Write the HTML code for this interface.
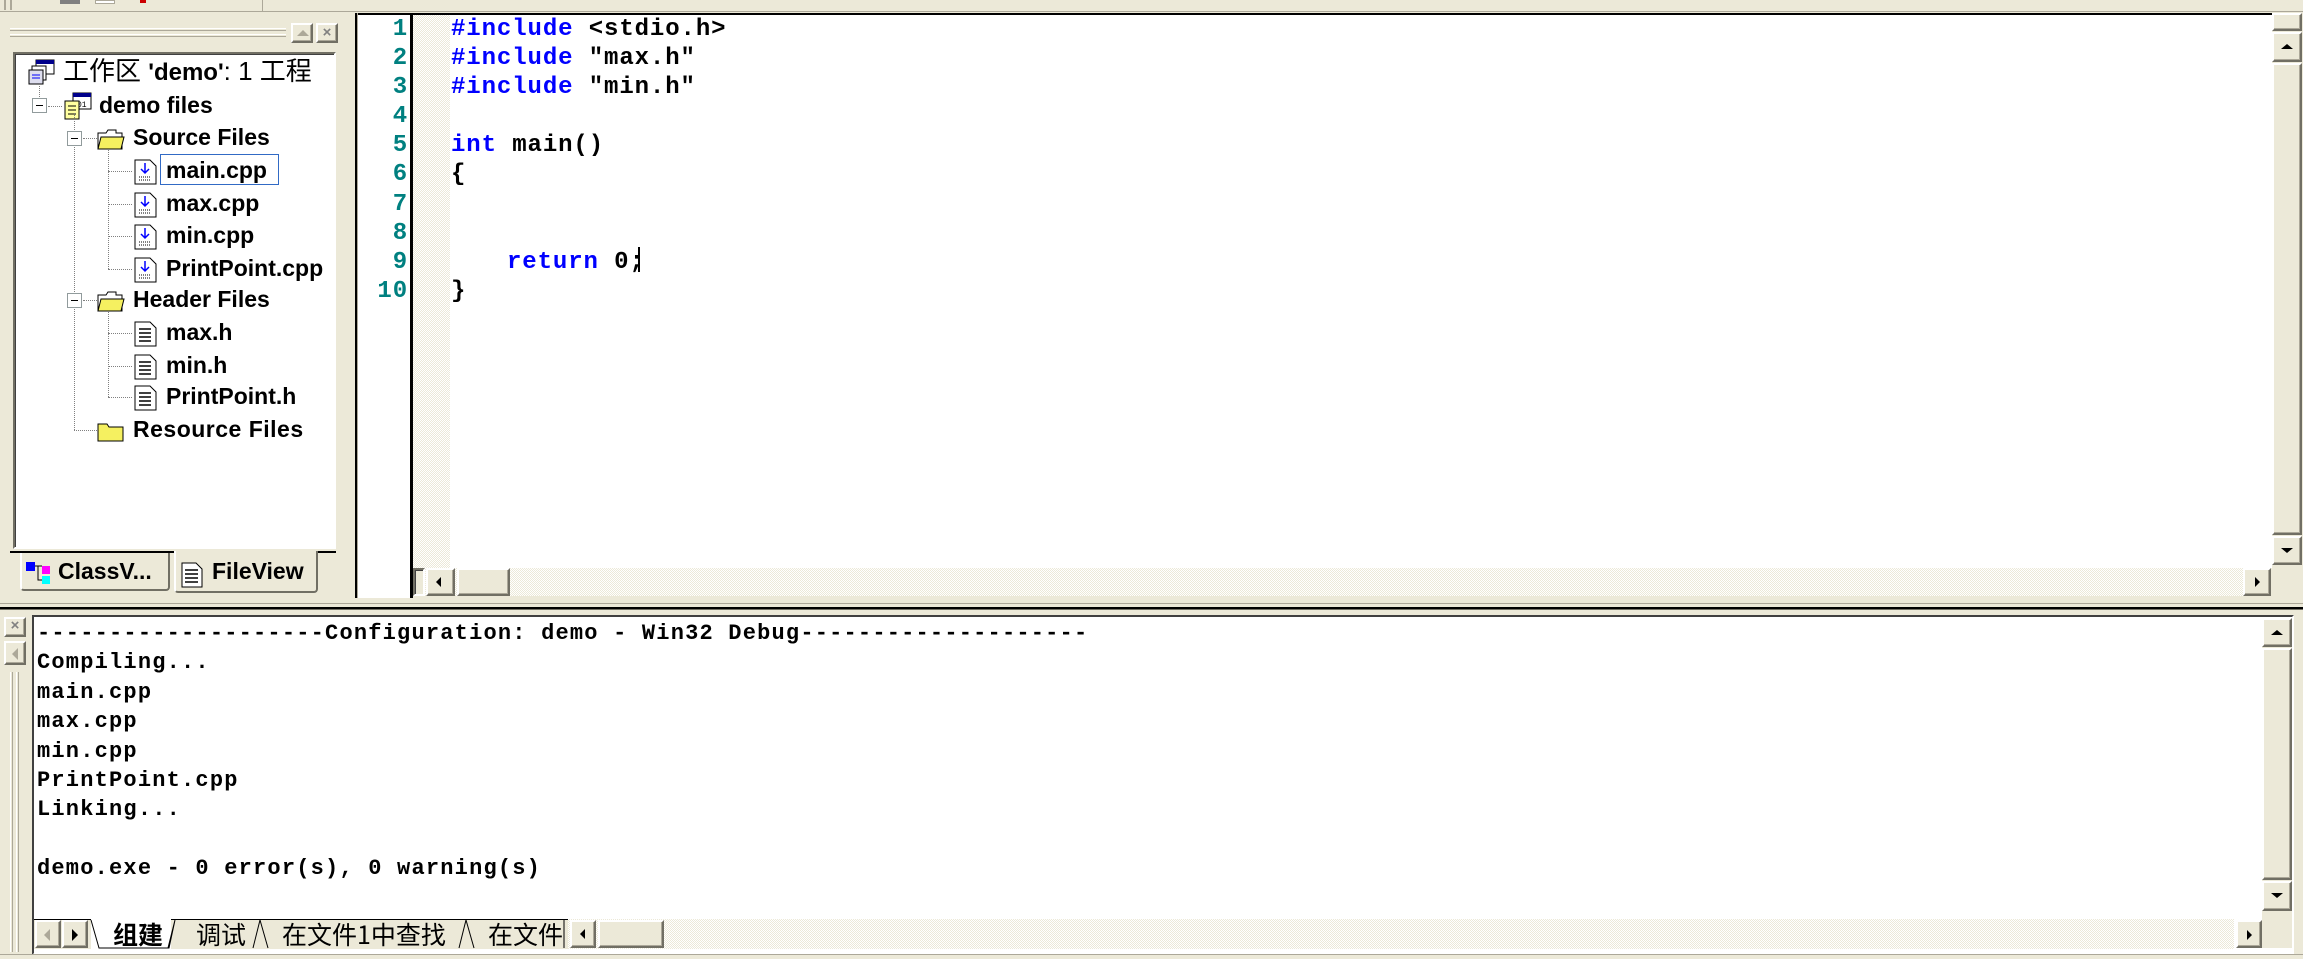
<!DOCTYPE html>
<html><head><meta charset="utf-8"><style>
*{margin:0;padding:0;box-sizing:border-box}
body{width:2303px;height:959px;background:#ece9d8;position:relative;overflow:hidden;font-family:"Liberation Sans","Noto Sans CJK SC",sans-serif}
.a{position:absolute}
.hatch{background:repeating-conic-gradient(#ece9d8 0 25%,#fff 0 50%) 0 0/2px 2px}
.btn{position:absolute;background:#ece9d8;border:2px solid;border-color:#fff #716f64 #716f64 #fff;box-shadow:inset -1px -1px 0 #aca899}
.sunk{border:2px solid;border-color:#716f64 #fff #fff #716f64;box-shadow:inset 1px 1px 0 #404040}
.tree{font-weight:bold;font-size:23px;color:#000;white-space:nowrap}
.code{font-family:"Liberation Mono",monospace;font-weight:bold;font-size:24px;letter-spacing:0.9px;line-height:29.1px;white-space:pre}
.out{font-family:"Liberation Mono",monospace;font-weight:bold;font-size:22px;letter-spacing:1.2px;line-height:29.4px;white-space:pre}
.kw{color:#0000ff}
.ln{color:#008080;text-align:right}
.dot{position:absolute;border-left:1px dotted #808080}
.doth{position:absolute;border-top:1px dotted #808080}
.tog{position:absolute;width:15px;height:15px;border:1px solid #919b9c;background:#fff}
.tog:after{content:"";position:absolute;left:3px;top:6px;width:7px;height:1px;background:#000}
.tri{width:0;height:0;position:absolute}
</style></head><body>
<div class="a" style="left:0;top:0;width:2303px;height:12px;background:#ece9d8;border-bottom:1px solid #aca899"></div>
<div class="a" style="left:4px;top:0;width:2px;height:10px;background:#aca899"></div>
<div class="a" style="left:10px;top:0;width:2px;height:10px;background:#aca899"></div>
<div class="a" style="left:60px;top:0;width:20px;height:4px;background:#808080"></div>
<div class="a" style="left:95px;top:0;width:20px;height:4px;background:#fff;border:1px solid #aca899"></div>
<div class="a" style="left:140px;top:0;width:6px;height:3px;background:#c00"></div>
<div class="a" style="left:262px;top:0;width:1px;height:12px;background:#aca899"></div>

<div class="a" style="left:10px;top:28px;width:276px;height:3px;border-top:1px solid #fff;border-bottom:1px solid #aca899"></div>
<div class="a" style="left:10px;top:34px;width:276px;height:3px;border-top:1px solid #fff;border-bottom:1px solid #aca899"></div>
<div class="btn" style="left:291px;top:23px;width:22px;height:20px"><div class="tri" style="left:4px;top:5px;border-left:6px solid transparent;border-right:6px solid transparent;border-bottom:6px solid #aca899"></div></div>
<div class="btn" style="left:316px;top:23px;width:22px;height:20px;font-size:15px;line-height:15px;text-align:center;color:#808080;font-weight:bold">×</div>

<div class="a sunk" style="left:13px;top:52px;width:323px;height:497px;background:#fff"></div>
<div class="a tree" style="left:28px;top:59px;font-weight:normal;font-size:22px;line-height:26px">
<svg width="28" height="26" style="vertical-align:-5px" viewBox="0 0 28 26"><rect x="8" y="1" width="18" height="14" fill="#fff" stroke="#000"/><rect x="8" y="1" width="18" height="4" fill="#00008b"/><rect x="4" y="7" width="14" height="14" fill="#fff" stroke="#000"/><rect x="1" y="11" width="14" height="14" fill="#dde" stroke="#000"/><line x1="4" y1="16" x2="12" y2="16" stroke="#00f"/><line x1="4" y1="19" x2="12" y2="19" stroke="#00f"/></svg></div>
<div class="a" style="left:63px;top:55px;font-size:26px;line-height:32px;white-space:nowrap;font-family:'Liberation Sans','Noto Sans CJK SC',sans-serif">工作区 <b style="font-size:24px">'demo'</b>: 1 工程</div>

<div class="dot" style="left:39px;top:86px;height:13px"></div>
<div class="tog" style="left:32px;top:98px"></div>
<div class="doth" style="left:48px;top:106px;width:14px"></div>
<svg class="a" style="left:63px;top:92px" width="30" height="28" viewBox="0 0 30 28"><rect x="10" y="1" width="18" height="16" fill="#fff" stroke="#000"/><rect x="10" y="1" width="18" height="4" fill="#00008b"/><text x="14" y="15" font-size="8" font-family="Liberation Mono">01</text><rect x="2" y="9" width="14" height="18" fill="#ffffa0" stroke="#000"/><line x1="5" y1="14" x2="13" y2="14" stroke="#000"/><line x1="5" y1="18" x2="13" y2="18" stroke="#000"/><line x1="5" y1="22" x2="13" y2="22" stroke="#000"/></svg>
<div class="a tree" style="left:99px;top:92px">demo files</div>

<div class="dot" style="left:74px;top:113px;height:317px"></div>
<div class="tog" style="left:67px;top:131px"></div>
<div class="doth" style="left:83px;top:138px;width:14px"></div>
<div class="doth" style="left:74px;top:430px;width:23px"></div>
<div class="tog" style="left:67px;top:293px"></div>
<div class="doth" style="left:83px;top:300px;width:14px"></div>

<div class="dot" style="left:108px;top:150px;height:119px"></div>
<div class="dot" style="left:108px;top:312px;height:85px"></div>

<svg class="a" style="left:97px;top:127px" width="28" height="24" viewBox="0 0 28 24"><path d="M1 6h8l2-3h8v3h6v16H1z" fill="#fff" stroke="#000"/><path d="M4 10h23l-3 12H1z" fill="#f5f060" stroke="#000"/></svg>
<div class="a tree" style="left:133px;top:124px">Source Files</div>
<svg class="a" style="left:97px;top:289px" width="28" height="24" viewBox="0 0 28 24"><path d="M1 6h8l2-3h8v3h6v16H1z" fill="#fff" stroke="#000"/><path d="M4 10h23l-3 12H1z" fill="#f5f060" stroke="#000"/></svg>
<div class="a tree" style="left:133px;top:286px">Header Files</div>
<svg class="a" style="left:97px;top:419px" width="28" height="24" viewBox="0 0 28 24"><path d="M1 5h9l2 3h14v14H1z" fill="#f5f060" stroke="#000"/></svg>
<div class="a tree" style="left:133px;top:416px;letter-spacing:0.5px">Resource Files</div>

<div class="doth" style="left:108px;top:171px;width:24px"></div>
<div class="doth" style="left:108px;top:204px;width:24px"></div>
<div class="doth" style="left:108px;top:236px;width:24px"></div>
<div class="doth" style="left:108px;top:269px;width:24px"></div>
<div class="doth" style="left:108px;top:333px;width:24px"></div>
<div class="doth" style="left:108px;top:366px;width:24px"></div>
<div class="doth" style="left:108px;top:397px;width:24px"></div>
<svg class="a" style="left:134px;top:159px" width="24" height="26" viewBox="0 0 24 26"><path d="M1 1h15l6 6v18H1z" fill="#fff" stroke="#000"/><path d="M11 4v9M7 10l4 4 4-4" stroke="#00f" fill="none" stroke-width="1.5"/><path d="M5 18h12M5 21h12" stroke="#000" stroke-dasharray="1 1"/></svg>
<svg class="a" style="left:134px;top:192px" width="24" height="26" viewBox="0 0 24 26"><path d="M1 1h15l6 6v18H1z" fill="#fff" stroke="#000"/><path d="M11 4v9M7 10l4 4 4-4" stroke="#00f" fill="none" stroke-width="1.5"/><path d="M5 18h12M5 21h12" stroke="#000" stroke-dasharray="1 1"/></svg>
<svg class="a" style="left:134px;top:224px" width="24" height="26" viewBox="0 0 24 26"><path d="M1 1h15l6 6v18H1z" fill="#fff" stroke="#000"/><path d="M11 4v9M7 10l4 4 4-4" stroke="#00f" fill="none" stroke-width="1.5"/><path d="M5 18h12M5 21h12" stroke="#000" stroke-dasharray="1 1"/></svg>
<svg class="a" style="left:134px;top:257px" width="24" height="26" viewBox="0 0 24 26"><path d="M1 1h15l6 6v18H1z" fill="#fff" stroke="#000"/><path d="M11 4v9M7 10l4 4 4-4" stroke="#00f" fill="none" stroke-width="1.5"/><path d="M5 18h12M5 21h12" stroke="#000" stroke-dasharray="1 1"/></svg>
<svg class="a" style="left:134px;top:321px" width="24" height="26" viewBox="0 0 24 26"><path d="M1 1h15l6 6v18H1z" fill="#fff" stroke="#000"/><path d="M5 8h12M5 12h12M5 16h12M5 20h12" stroke="#000" stroke-width="1.5"/></svg>
<svg class="a" style="left:134px;top:354px" width="24" height="26" viewBox="0 0 24 26"><path d="M1 1h15l6 6v18H1z" fill="#fff" stroke="#000"/><path d="M5 8h12M5 12h12M5 16h12M5 20h12" stroke="#000" stroke-width="1.5"/></svg>
<svg class="a" style="left:134px;top:385px" width="24" height="26" viewBox="0 0 24 26"><path d="M1 1h15l6 6v18H1z" fill="#fff" stroke="#000"/><path d="M5 8h12M5 12h12M5 16h12M5 20h12" stroke="#000" stroke-width="1.5"/></svg>
<div class="a" style="left:160px;top:154px;width:119px;height:31px;border:1px solid #316ac5"></div>
<div class="a tree" style="left:166px;top:157px">main.cpp</div>
<div class="a tree" style="left:166px;top:190px">max.cpp</div>
<div class="a tree" style="left:166px;top:222px">min.cpp</div>
<div class="a tree" style="left:166px;top:255px">PrintPoint.cpp</div>
<div class="a tree" style="left:166px;top:319px">max.h</div>
<div class="a tree" style="left:166px;top:352px">min.h</div>
<div class="a tree" style="left:166px;top:383px">PrintPoint.h</div>

<div class="a" style="left:10px;top:551px;width:326px;height:2px;background:#000"></div>
<div class="a" style="left:20px;top:553px;width:150px;height:38px;border:2px solid;border-top:none;border-color:#fff #716f64 #716f64 #fff;border-radius:0 0 4px 4px"></div>
<svg class="a" style="left:25px;top:561px" width="30" height="26" viewBox="0 0 30 26"><rect x="1" y="1" width="9" height="9" fill="#00f"/><rect x="17" y="5" width="8" height="8" fill="#f0f"/><rect x="17" y="15" width="8" height="8" fill="#0ff"/><path d="M10 5h7M13 5v14h4" stroke="#000" fill="none"/></svg>
<div class="a tree" style="left:58px;top:558px">ClassV...</div>
<div class="a" style="left:174px;top:551px;width:144px;height:42px;background:#ece9d8;border:2px solid;border-top:none;border-color:#fff #716f64 #716f64 #fff;border-radius:0 0 4px 4px"></div>
<svg class="a" style="left:181px;top:562px" width="22" height="26" viewBox="0 0 22 26"><path d="M1 1h14l6 6v18H1z" fill="#fff" stroke="#000"/><path d="M4 8h13M4 12h13M4 16h13M4 20h13" stroke="#000" stroke-width="1.5"/></svg>
<div class="a tree" style="left:212px;top:558px">FileView</div>

<div class="a" style="left:355px;top:13px;width:3px;height:585px;background:#000;border-right:1px solid #aca899"></div>
<div class="a" style="left:358px;top:13px;width:1914px;height:555px;background:#fff;border-top:2px solid #000"></div>
<div class="a" style="left:358px;top:560px;width:52px;height:38px;background:#fff"></div>
<div class="a" style="left:410px;top:13px;width:3px;height:585px;background:#000"></div>
<div class="a hatch" style="left:413px;top:15px;width:37px;height:553px"></div>
<div class="a code ln" style="left:358px;top:15px;width:50px">1
2
3
4
5
6
7
8
9
10</div>
<div class="a code" style="left:451px;top:15px"><span class="kw">#include</span> &lt;stdio.h&gt;
<span class="kw">#include</span> "max.h"
<span class="kw">#include</span> "min.h"

<span class="kw">int</span> main()
{


</div>
<div class="a code" style="left:507px;top:248px"><span class="kw">return</span> 0;</div>
<div class="a code" style="left:451px;top:277px">}</div>
<div class="a" style="left:638px;top:247px;width:2px;height:25px;background:#000"></div>

<div class="a hatch" style="left:413px;top:568px;width:1830px;height:28px"></div>
<div class="a sunk" style="left:413px;top:568px;width:12px;height:28px;background:#ece9d8"></div>
<div class="btn" style="left:426px;top:568px;width:29px;height:28px"><div class="tri" style="left:8px;top:7px;border-top:5px solid transparent;border-bottom:5px solid transparent;border-right:5px solid #000"></div></div>
<div class="btn" style="left:457px;top:568px;width:53px;height:28px"></div>
<div class="btn" style="left:2243px;top:568px;width:28px;height:28px"><div class="tri" style="left:10px;top:7px;border-top:5px solid transparent;border-bottom:5px solid transparent;border-left:5px solid #000"></div></div>
<div class="a" style="left:2272px;top:13px;width:30px;height:555px;background:#ece9d8"></div>
<div class="btn" style="left:2272px;top:13px;width:30px;height:18px"></div>
<div class="btn" style="left:2272px;top:32px;width:30px;height:30px"><div class="tri" style="left:7px;top:10px;border-left:6px solid transparent;border-right:6px solid transparent;border-bottom:5px solid #000"></div></div>
<div class="btn" style="left:2272px;top:63px;width:30px;height:472px"></div>
<div class="btn" style="left:2272px;top:536px;width:30px;height:29px"><div class="tri" style="left:7px;top:10px;border-left:6px solid transparent;border-right:6px solid transparent;border-top:5px solid #000"></div></div>

<div class="a" style="left:0;top:600px;width:2303px;height:4px;border-bottom:1px solid #aca899"></div>
<div class="a" style="left:0;top:607px;width:2303px;height:3px;background:#000;border-bottom:1px solid #716f64"></div>

<div class="btn" style="left:4px;top:617px;width:22px;height:20px;font-size:15px;line-height:14px;text-align:center;color:#808080;font-weight:bold">×</div>
<div class="btn" style="left:4px;top:641px;width:22px;height:24px"><div class="tri" style="left:6px;top:5px;border-top:6px solid transparent;border-bottom:6px solid transparent;border-right:6px solid #aca899"></div></div>
<div class="a" style="left:10px;top:672px;width:3px;height:280px;border-left:1px solid #fff;border-right:1px solid #aca899"></div>
<div class="a" style="left:16px;top:672px;width:3px;height:280px;border-left:1px solid #fff;border-right:1px solid #aca899"></div>

<div class="a" style="left:32px;top:615px;width:2262px;height:340px;background:#fff;border:2px solid;border-color:#404040 #fff #fff #404040"></div>
<div class="a out" style="left:37px;top:619px">--------------------Configuration: demo - Win32 Debug--------------------
Compiling...
main.cpp
max.cpp
min.cpp
PrintPoint.cpp
Linking...

demo.exe - 0 error(s), 0 warning(s)</div>

<div class="a" style="left:2262px;top:618px;width:30px;height:330px;background:#ece9d8"></div>
<div class="btn" style="left:2262px;top:618px;width:30px;height:29px"><div class="tri" style="left:7px;top:10px;border-left:6px solid transparent;border-right:6px solid transparent;border-bottom:5px solid #000"></div></div>
<div class="btn" style="left:2262px;top:648px;width:30px;height:232px"></div>
<div class="btn" style="left:2262px;top:881px;width:30px;height:30px"><div class="tri" style="left:7px;top:10px;border-left:6px solid transparent;border-right:6px solid transparent;border-top:5px solid #000"></div></div>

<div class="a hatch" style="left:34px;top:919px;width:2200px;height:30px"></div>
<div class="a" style="left:34px;top:919px;width:534px;height:30px;background:#ece9d8;border-top:1px solid #000"></div>
<div class="btn" style="left:35px;top:920px;width:26px;height:28px"><div class="tri" style="left:7px;top:7px;border-top:6px solid transparent;border-bottom:6px solid transparent;border-right:6px solid #aca899"></div></div>
<div class="btn" style="left:62px;top:920px;width:26px;height:28px"><div class="tri" style="left:8px;top:7px;border-top:6px solid transparent;border-bottom:6px solid transparent;border-left:6px solid #000"></div></div>
<svg class="a" style="left:88px;top:919px" width="480" height="30" viewBox="0 0 480 30"><rect x="3" y="0" width="80" height="30" fill="#fff"/><path d="M3 1l8 28h70l6-28M87 1l-7 28M172 1l8 28M172 1l-7 28M378 1l8 28M378 1l-7 28M476 1v28" stroke="#000" fill="none"/></svg>
<div class="a" style="left:113px;top:919px;font-size:25px;font-weight:bold;line-height:30px;font-family:'Noto Sans CJK SC',sans-serif">组建</div>
<div class="a" style="left:196px;top:919px;font-size:25px;line-height:30px;font-family:'Noto Sans CJK SC',sans-serif">调试</div>
<div class="a" style="left:282px;top:919px;font-size:25px;line-height:30px;font-family:'Noto Sans CJK SC',sans-serif;white-space:nowrap">在文件1中查找</div>
<div class="a" style="left:488px;top:919px;width:76px;overflow:hidden;font-size:25px;line-height:30px;font-family:'Noto Sans CJK SC',sans-serif;white-space:nowrap">在文件2中</div>
<div class="btn" style="left:570px;top:920px;width:26px;height:28px"><div class="tri" style="left:8px;top:7px;border-top:5px solid transparent;border-bottom:5px solid transparent;border-right:5px solid #000"></div></div>
<div class="btn" style="left:598px;top:920px;width:66px;height:28px"></div>
<div class="btn" style="left:2236px;top:920px;width:26px;height:28px"><div class="tri" style="left:9px;top:8px;border-top:5px solid transparent;border-bottom:5px solid transparent;border-left:5px solid #000"></div></div>
<div class="a" style="left:0;top:954px;width:2303px;height:1px;background:#aca899"></div>
</body></html>
